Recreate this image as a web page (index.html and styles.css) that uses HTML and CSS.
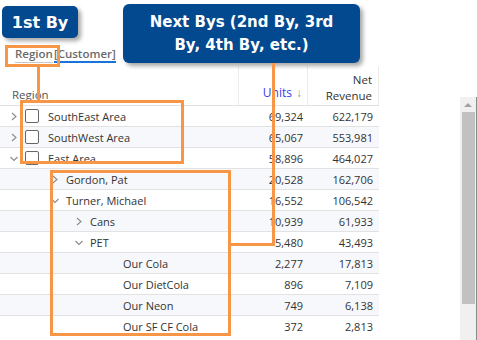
FILE: index.html
```html
<!DOCTYPE html>
<html lang="en">
<head>
    <meta charset="UTF-8">
    <meta name="viewport" content="width=device-width, initial-scale=1.0">
    <title>1st By and Next Bys</title>
    <link rel="stylesheet" href="styles.css">
</head>
<body>
<div class="page">
    <div class="tabs">
        <span class="tab">Region</span>
        <span class="tab active">[Customer]</span>
    </div>

    <div class="main">
        <div class="grid">
            <div class="head">
                <div class="hcell hname">Region</div>
                <div class="hcell hnum sorted">Units<span class="arrow">↓</span></div>
                <div class="hcell hnum hlast">Net<br>Revenue</div>
            </div>

            <div class="row">
                <div class="name lv1"><svg class="chev" width="8" height="9" viewBox="0 0 8 9"><polyline points="2,1 6,4.5 2,8"/></svg><span class="check"></span>SouthEast Area</div>
                <div class="num">69,324</div><div class="num last">622,179</div>
            </div>
            <div class="row">
                <div class="name lv1"><svg class="chev" width="8" height="9" viewBox="0 0 8 9"><polyline points="2,1 6,4.5 2,8"/></svg><span class="check"></span>SouthWest Area</div>
                <div class="num">65,067</div><div class="num last">553,981</div>
            </div>
            <div class="row">
                <div class="name lv1"><svg class="chev" width="8" height="9" viewBox="0 0 8 9"><polyline points="0.5,3 4,6.5 7.5,3"/></svg><span class="check"></span>East Area</div>
                <div class="num">58,896</div><div class="num last">464,027</div>
            </div>
            <div class="row">
                <div class="name lv2"><svg class="chev" width="8" height="9" viewBox="0 0 8 9"><polyline points="2,1 6,4.5 2,8"/></svg>Gordon, Pat</div>
                <div class="num">20,528</div><div class="num last">162,706</div>
            </div>
            <div class="row">
                <div class="name lv2"><svg class="chev" width="8" height="9" viewBox="0 0 8 9"><polyline points="0.5,3 4,6.5 7.5,3"/></svg>Turner, Michael</div>
                <div class="num">16,552</div><div class="num last">106,542</div>
            </div>
            <div class="row">
                <div class="name lv3"><svg class="chev" width="8" height="9" viewBox="0 0 8 9"><polyline points="2,1 6,4.5 2,8"/></svg>Cans</div>
                <div class="num">10,939</div><div class="num last">61,933</div>
            </div>
            <div class="row">
                <div class="name lv3"><svg class="chev" width="8" height="9" viewBox="0 0 8 9"><polyline points="0.5,3 4,6.5 7.5,3"/></svg>PET</div>
                <div class="num">5,480</div><div class="num last">43,493</div>
            </div>
            <div class="row">
                <div class="name lv4">Our Cola</div>
                <div class="num">2,277</div><div class="num last">17,813</div>
            </div>
            <div class="row">
                <div class="name lv4">Our DietCola</div>
                <div class="num">896</div><div class="num last">7,109</div>
            </div>
            <div class="row">
                <div class="name lv4">Our Neon</div>
                <div class="num">749</div><div class="num last">6,138</div>
            </div>
            <div class="row">
                <div class="name lv4">Our SF CF Cola</div>
                <div class="num">372</div><div class="num last">2,813</div>
            </div>
        </div>

        <div class="scroll">
            <div class="up"><span class="tri"></span></div>
            <div class="thumb"></div>
        </div>
    </div>

    <!-- annotations -->
    <div class="callout first">1st By</div>
    <div class="callout next">Next Bys (2nd By, 3rd<br>By, 4th By, etc.)</div>
    <div class="mark tab-mark"></div>
    <div class="wire wire-tab"></div>
    <div class="mark box-first"></div>
    <div class="mark box-next"></div>
    <div class="wire wire-down"></div>
    <div class="wire wire-left"></div>
</div>
</body>
</html>
```

FILE: styles.css
```css
body {
    margin: 0;
    background: #fff;
    font-family: "Open Sans", "Liberation Sans", sans-serif;
    font-size: 11px;
    color: #333;
}
.page {
    position: relative;
    width: 477px;
    height: 340px;
    overflow: hidden;
}
.tabs {
    display: flex;
    height: 66px;
    box-sizing: border-box;
    padding: 46px 0 0 15px;
}
.tab {
    font-weight: 600;
    font-size: 11.5px;
    color: #6b6b6b;
    line-height: 15px;
    height: 16px;
    border-bottom: 1px solid #c8c8c8;
}
.tab.active {
    margin-left: 1px;
    border-bottom: 2px solid #1a73d9;
    height: 15px;
}
.main {
    display: flex;
}
.grid {
    width: 379px;
}
.head {
    display: flex;
    height: 39px;
}
.hcell {
    display: flex;
    align-items: flex-end;
    box-sizing: border-box;
    padding-bottom: 2px;
    line-height: 16px;
    font-size: 11.5px;
    color: #555;
}
.hname {
    width: 239px;
    padding-left: 12px;
    border-right: 1px solid #ececec;
}
.hnum {
    justify-content: flex-end;
    text-align: right;
    width: 69px;
    padding-right: 5px;
    border-right: 1px solid #ececec;
}
.hlast {
    width: 71px;
    padding-right: 6px;
    color: #333;
    padding-bottom: 1px;
}
.sorted {
    color: #3d3cf0;
    font-size: 12px;
    padding-bottom: 4px;
}
.arrow {
    color: #9a9ab0;
    margin-left: 4px;
    font-size: 12px;
}
.row {
    display: flex;
    height: 21px;
    box-sizing: border-box;
    border-top: 1px solid #e2e2e2;
    align-items: center;
}
.row:nth-child(odd) {
    background: #f6f8fc;
}
.name {
    width: 239px;
    box-sizing: border-box;
    display: flex;
    align-items: center;
    white-space: nowrap;
}
.lv1 { padding-left: 10px; }
.lv2 { padding-left: 51px; }
.lv3 { padding-left: 75px; }
.lv4 { padding-left: 123px; }
.chev {
    margin-right: 7px;
    flex: none;
}
.chev polyline {
    fill: none;
    stroke: #8a8a8a;
    stroke-width: 1.1;
}
.check {
    width: 12px;
    height: 12px;
    border: 1px solid #666;
    border-radius: 2px;
    margin-right: 9px;
    background: #fff;
    flex: none;
}
.num {
    width: 69px;
    box-sizing: border-box;
    text-align: right;
    padding-right: 5px;
}
.num.last {
    width: 71px;
    padding-right: 6px;
}
.scroll {
    margin-left: auto;
    margin-top: 31px;
    width: 17px;
    height: 260px;
    box-sizing: border-box;
    background: #f0f0f0;
    border-right: 1px solid #8a8a8a;
    flex: none;
}
.up {
    height: 15px;
    display: flex;
    justify-content: center;
    align-items: center;
}
.tri {
    width: 0;
    height: 0;
    border-left: 4px solid transparent;
    border-right: 4px solid transparent;
    border-bottom: 4px solid #a3a3a3;
}
.thumb {
    width: 13px;
    height: 192px;
    margin-left: 2px;
    background: #c1c1c1;
}
.callout {
    position: absolute;
    background: #03498f;
    color: #fff;
    font-family: "DejaVu Sans", Verdana, sans-serif;
    font-weight: bold;
    font-size: 15px;
    text-align: center;
    box-shadow: 3px 3px 4px rgba(0, 0, 0, 0.35);
    display: flex;
    align-items: center;
    justify-content: center;
}
.callout.first {
    left: 2px;
    top: 6px;
    width: 76px;
    height: 32px;
    border-radius: 5px;
    font-size: 16px;
}
.callout.next {
    left: 123px;
    top: 4px;
    width: 237px;
    height: 59px;
    border-radius: 6px;
    line-height: 23px;
}
.mark {
    position: absolute;
    border: 3px solid #f79646;
    box-sizing: border-box;
}
.tab-mark {
    left: 5px;
    top: 45px;
    width: 55px;
    height: 22px;
}
.box-first {
    left: 20px;
    top: 100px;
    width: 164px;
    height: 64px;
}
.box-next {
    left: 50px;
    top: 170px;
    width: 181px;
    height: 166px;
}
.wire {
    position: absolute;
    background: #f79646;
}
.wire-tab {
    left: 37px;
    top: 66px;
    width: 3px;
    height: 35px;
}
.wire-down {
    left: 272px;
    top: 63px;
    width: 3px;
    height: 183px;
}
.wire-left {
    left: 230px;
    top: 243px;
    width: 45px;
    height: 3px;
}
```
